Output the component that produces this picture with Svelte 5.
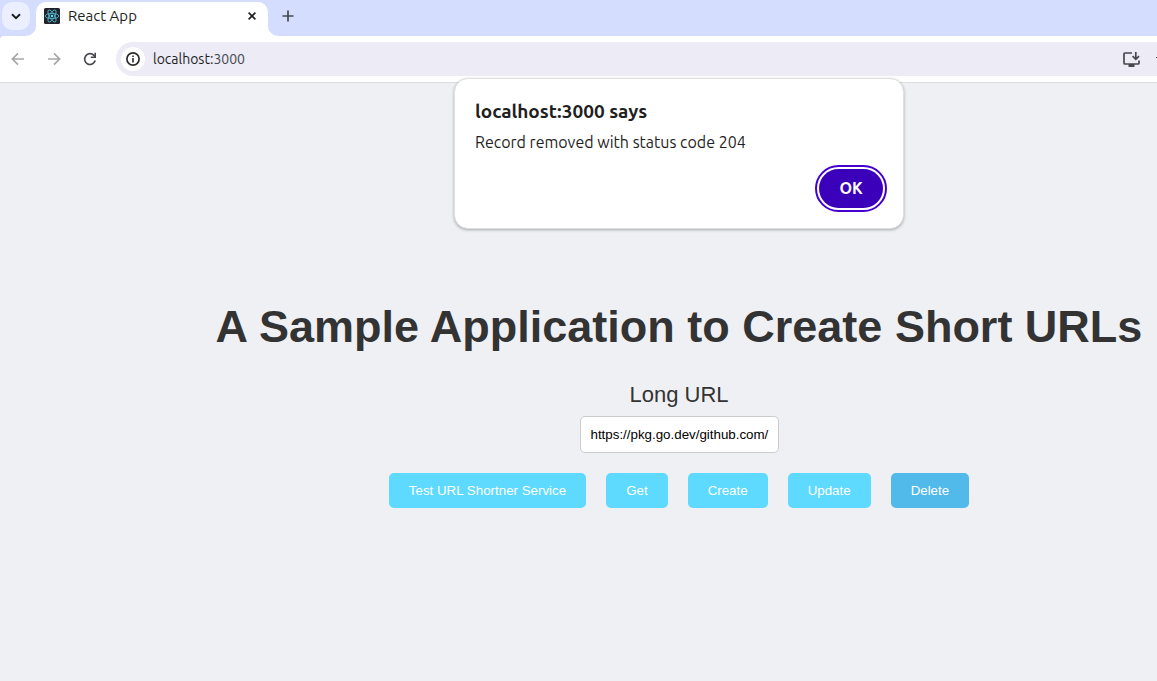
<script>
  let longUrl = $state('https://pkg.go.dev/github.com/');
  const actions = ['Test URL Shortner Service', 'Get', 'Create', 'Update', 'Delete'];
</script>

<div class="browser">
  <header>
    <div class="strip">
      <button class="tab-search" aria-label="Search tabs">
        <svg width="10" height="7" viewBox="0 0 10 7"><path d="M1 1.3 5 5.2 9 1.3" fill="none" stroke="#1f1f1f" stroke-width="2" /></svg>
      </button>
      <div class="tab">
        <svg class="flare left" width="10" height="10" viewBox="0 0 10 10"><path d="M10 0V10H0A10 10 0 0 0 10 0Z" fill="#fff" /></svg>
        <svg width="16" height="16" viewBox="0 0 16 16">
          <rect width="16" height="16" rx="1.5" fill="#20232a" />
          <g fill="none" stroke="#58c4dc" stroke-width=".8">
            <ellipse cx="8" cy="8" rx="6.8" ry="2.6" />
            <ellipse cx="8" cy="8" rx="6.8" ry="2.6" transform="rotate(60 8 8)" />
            <ellipse cx="8" cy="8" rx="6.8" ry="2.6" transform="rotate(120 8 8)" />
          </g>
          <circle cx="8" cy="8" r="1.3" fill="#61dafb" />
        </svg>
        <span>React App</span>
        <button class="close" aria-label="Close tab">
          <svg width="8" height="8" viewBox="0 0 8 8"><path d="M.6.6 7.4 7.4M7.4.6.6 7.4" stroke="#1f1f1f" stroke-width="1.6" /></svg>
        </button>
        <svg class="flare right" width="10" height="10" viewBox="0 0 10 10"><path d="M0 0V10H10A10 10 0 0 1 0 0Z" fill="#fff" /></svg>
      </div>
      <button class="new-tab" aria-label="New tab">
        <svg width="12" height="12" viewBox="0 0 12 12"><path d="M6 .5V11.5M.5 6H11.5" stroke="#46484e" stroke-width="1.7" /></svg>
      </button>
    </div>
    <div class="toolbar">
      <button class="nav" aria-label="Back">
        <svg width="14" height="14" viewBox="0 0 14 14"><path d="M7 1.4 1.4 7 7 12.6M1.6 7H13" fill="none" stroke="#a6a6a8" stroke-width="1.7" /></svg>
      </button>
      <button class="nav" aria-label="Forward">
        <svg width="14" height="14" viewBox="0 0 14 14"><path d="M7 1.4 12.6 7 7 12.6M12.4 7H1" fill="none" stroke="#a6a6a8" stroke-width="1.7" /></svg>
      </button>
      <button class="nav" aria-label="Reload">
        <svg width="14" height="14" viewBox="0 0 14 14"><path d="M12.2 8.6A5.4 5.4 0 1 1 10.9 3.3L12.2 4.8" fill="none" stroke="#46484e" stroke-width="1.7" /><path d="M13 .8V6H7.8V4.4H11.4V.8Z" fill="#46484e" /></svg>
      </button>
      <div class="omnibox">
        <button class="info" aria-label="View site information">
          <svg width="14" height="14" viewBox="0 0 14 14"><circle cx="7" cy="7" r="6.1" fill="none" stroke="#2b2b2e" stroke-width="1.7" /><path d="M6.2 3.4H7.8V5H6.2ZM6.2 6.1H7.8V10.6H6.2Z" fill="#2b2b2e" /></svg>
        </button>
        <span class="address">localhost:<span>3000</span></span>
        <button class="install" aria-label="Install app">
          <svg width="17" height="15" viewBox="0 0 17 15"><path d="M9 1H2Q1 1 1 2V11Q1 12 2 12H15Q16 12 16 11V8.5" fill="none" stroke="#46484e" stroke-width="1.7" /><path d="M5.5 12H11.5V15H5.5Z" fill="#46484e" /><path d="M12.8 0V7M9.6 4.1 12.8 7.3 16 4.1" fill="none" stroke="#46484e" stroke-width="1.7" /></svg>
        </button>
        <svg class="star" width="1" height="17" viewBox="0 0 1 17"><path d="M0 6H1V7H0Z" fill="#46484e" /></svg>
      </div>
    </div>
  </header>

  <main>
    <h1>A Sample Application to Create Short URLs</h1>
    <label for="long-url">Long URL</label>
    <input id="long-url" type="text" bind:value={longUrl} />
    <div class="actions">
      {#each actions as action}
        <button class:active={action === 'Delete'}>{action}</button>
      {/each}
    </div>
  </main>

  <div class="overlay">
    <div class="dialog" role="alertdialog" aria-labelledby="dialog-title" aria-describedby="dialog-message">
      <h2 id="dialog-title">localhost:3000 says</h2>
      <p id="dialog-message">Record removed with status code 204</p>
      <button>OK</button>
    </div>
  </div>
</div>

<style>
  :global(body) { margin: 0; background: #eff0f4; }
  * { box-sizing: border-box; }
  button { border: 0; padding: 0; cursor: pointer; }
  svg { display: block; flex: none; }

  .browser {
    position: relative;
    min-height: 100vh;
    overflow: hidden;
    font-family: Ubuntu, "Noto Sans", sans-serif;
    color: #1f1f1f;
  }
  header { background: #d5ddff; }
  .strip { display: flex; height: 36px; padding: 2px 2px 0; }
  .tab-search {
    display: grid;
    place-items: center;
    width: 28px;
    height: 28px;
    border-radius: 10px;
    background: #ebefff;
  }
  .tab {
    position: relative;
    display: flex;
    align-items: center;
    gap: 8px;
    width: 232px;
    margin-left: 6px;
    padding: 0 8px 6px;
    border-radius: 10px 10px 0 0;
    background: #fff;
    font-size: 15px;
    line-height: 20px;
  }
  .flare { position: absolute; bottom: 0; }
  .left { right: 100%; }
  .right { left: 100%; }
  .close { display: grid; place-items: center; width: 16px; height: 16px; margin-left: auto; background: none; }
  .new-tab { display: grid; place-items: center; width: 28px; height: 28px; margin-left: 6px; background: none; }

  .toolbar {
    display: flex;
    align-items: center;
    gap: 8px;
    padding: 6px 0 6px 4px;
    border-bottom: 1px solid #dcdddf;
    border-top-left-radius: 4px;
    background: #fff;
  }
  .nav { display: grid; place-items: center; width: 28px; height: 28px; background: none; }
  .omnibox {
    display: flex;
    flex: 1;
    align-items: center;
    height: 34px;
    margin-left: 4px;
    padding-left: 5px;
    border-radius: 17px 0 0 17px;
    background: #ecebf6;
    font-size: 14px;
    line-height: 20px;
  }
  .info { display: grid; place-items: center; width: 24px; height: 24px; border-radius: 50%; background: #fff; }
  .address { margin-left: 8px; }
  .address span { color: #46484e; }
  .install { margin-left: auto; background: none; }
  .star { margin-left: 16px; }

  main {
    display: flex;
    flex-direction: column;
    align-items: center;
    padding: 218px 0 40px 201px;
    font-family: "Liberation Sans", Arial, sans-serif;
    color: #333;
  }
  h1 { margin: 0 0 29px; font-size: 45px; line-height: 52px; white-space: nowrap; }
  label { font-size: 22px; line-height: 26px; margin-bottom: 8px; }
  input {
    width: 199px;
    height: 37px;
    padding: 0 9px 0 10px;
    border: 1px solid #ccc;
    border-radius: 5px;
    background: #fff;
    color: #000;
    font-family: "Liberation Sans", Arial, sans-serif;
  }
  .actions { display: flex; gap: 20px; margin-top: 20px; }
  .actions button {
    height: 35px;
    padding: 0 20px;
    border-radius: 5px;
    background: #5ed9ff;
    color: #fff;
    font-family: "Liberation Sans", Arial, sans-serif;
  }
  .actions .active { background: #52b9eb; }

  .overlay {
    position: absolute;
    top: 78px;
    left: 201px;
    right: 0;
    display: flex;
    justify-content: center;
    pointer-events: none;
  }
  .dialog {
    display: flex;
    flex-direction: column;
    width: 450px;
    padding: 20px;
    border: 1px solid #dfe0e2;
    border-radius: 14px;
    background: #fff;
    box-shadow: 0 1px 3px rgb(0 0 0 / 30%);
    pointer-events: auto;
  }
  h2 { margin: 0 0 8px; font-size: 19px; font-weight: 600; line-height: 24px; }
  p { margin: 0; font-size: 16px; line-height: 22px; }
  .dialog button {
    align-self: flex-end;
    width: 64px;
    height: 39px;
    margin-top: 16px;
    padding-bottom: 1px;
    border-radius: 20px;
    background: #3b00b9;
    color: #fff;
    font: 600 16px Ubuntu, "Noto Sans", sans-serif;
    outline: 2px solid #4300cf;
    outline-offset: 2px;
  }
</style>
